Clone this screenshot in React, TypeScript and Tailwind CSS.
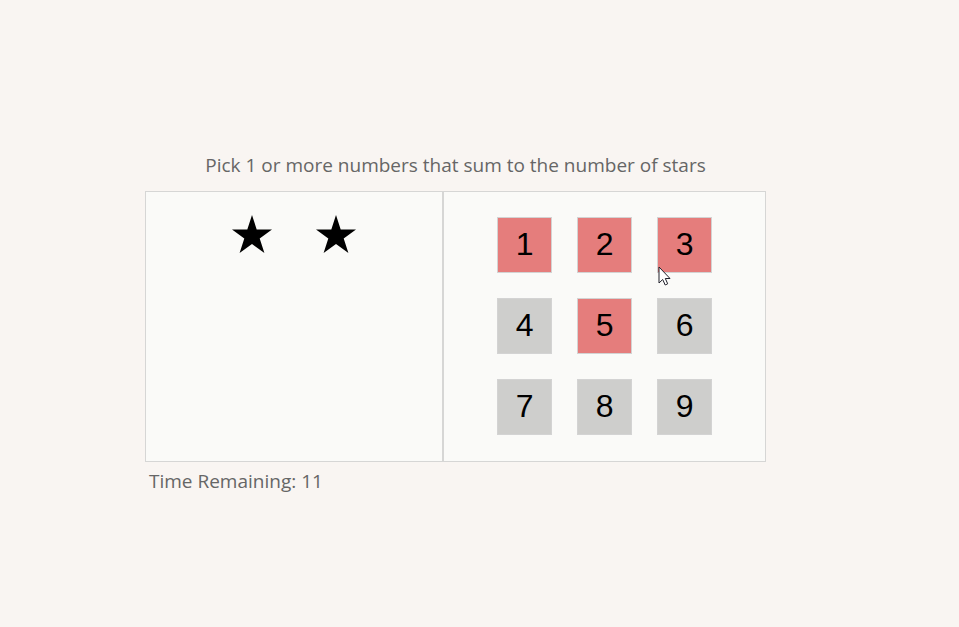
import { useState } from "react";

const STARS = 2;
const NUMBERS = [1, 2, 3, 4, 5, 6, 7, 8, 9];

function Star() {
  return (
    <svg viewBox="0 0 40 38" className="h-[38px] w-10" aria-hidden="true">
      <path d="M20 0 L24.7 14.5 H40 L27.7 23.5 L32.4 38 L20 29 L7.6 38 L12.3 23.5 L0 14.5 H15.3 Z" fill="#000" />
    </svg>
  );
}

function Pointer() {
  return (
    <svg
      viewBox="0 0 13 20"
      className="pointer-events-none absolute top-[49px] left-px z-10 h-5 w-[13px]"
      aria-hidden="true"
    >
      <path
        d="M1 1 V17 L4.7 13.5 L7.2 19 L9.7 17.8 L7.3 12.5 H12 Z"
        fill="#fff"
        stroke="#20202a"
        strokeWidth="1"
        strokeLinejoin="round"
      />
    </svg>
  );
}

export default function App() {
  const [picked, setPicked] = useState<number[]>([1, 2, 3, 5]);
  const toggle = (n: number) =>
    setPicked((p) => (p.includes(n) ? p.filter((x) => x !== n) : [...p, n]));

  return (
    <main className="flex min-h-screen flex-col items-center bg-[#f9f5f2] pt-[151px] pr-12 font-['Open_Sans',sans-serif] text-[#666]">
      <div className="w-full max-w-[621px]">
        <p className="text-center text-[19px] leading-7">
          Pick 1 or more numbers that sum to the number of stars
        </p>
        <div className="mt-3 grid grid-cols-[12fr_13fr] border border-[#d6d6d5] bg-[#fafaf8]">
          <div className="flex items-start justify-center gap-11 border-r border-[#d6d6d5] pt-[23px]">
            {Array.from({ length: STARS }, (_, i) => (
              <Star key={i} />
            ))}
          </div>
          <div className="flex justify-center border-l border-[#d6d6d5] pt-[25px] pb-[26px]">
            <div className="grid grid-cols-3 gap-[25px]">
              {NUMBERS.map((n) => (
                <div key={n} className="relative">
                  <button
                    type="button"
                    onClick={() => toggle(n)}
                    aria-pressed={picked.includes(n)}
                    className={`block h-14 w-[55px] border border-[#d3d3d3] pb-[3px] text-center font-['Liberation_Sans',Arial,sans-serif] text-[32px] leading-none text-black ${
                      picked.includes(n) ? "bg-[#e57d7c]" : "bg-[#cececc]"
                    }`}
                  >
                    {n}
                  </button>
                  {n === 3 && <Pointer />}
                </div>
              ))}
            </div>
          </div>
        </div>
        <p className="mt-[5px] pl-1 text-[19px] leading-7">Time Remaining: 11</p>
      </div>
    </main>
  );
}
